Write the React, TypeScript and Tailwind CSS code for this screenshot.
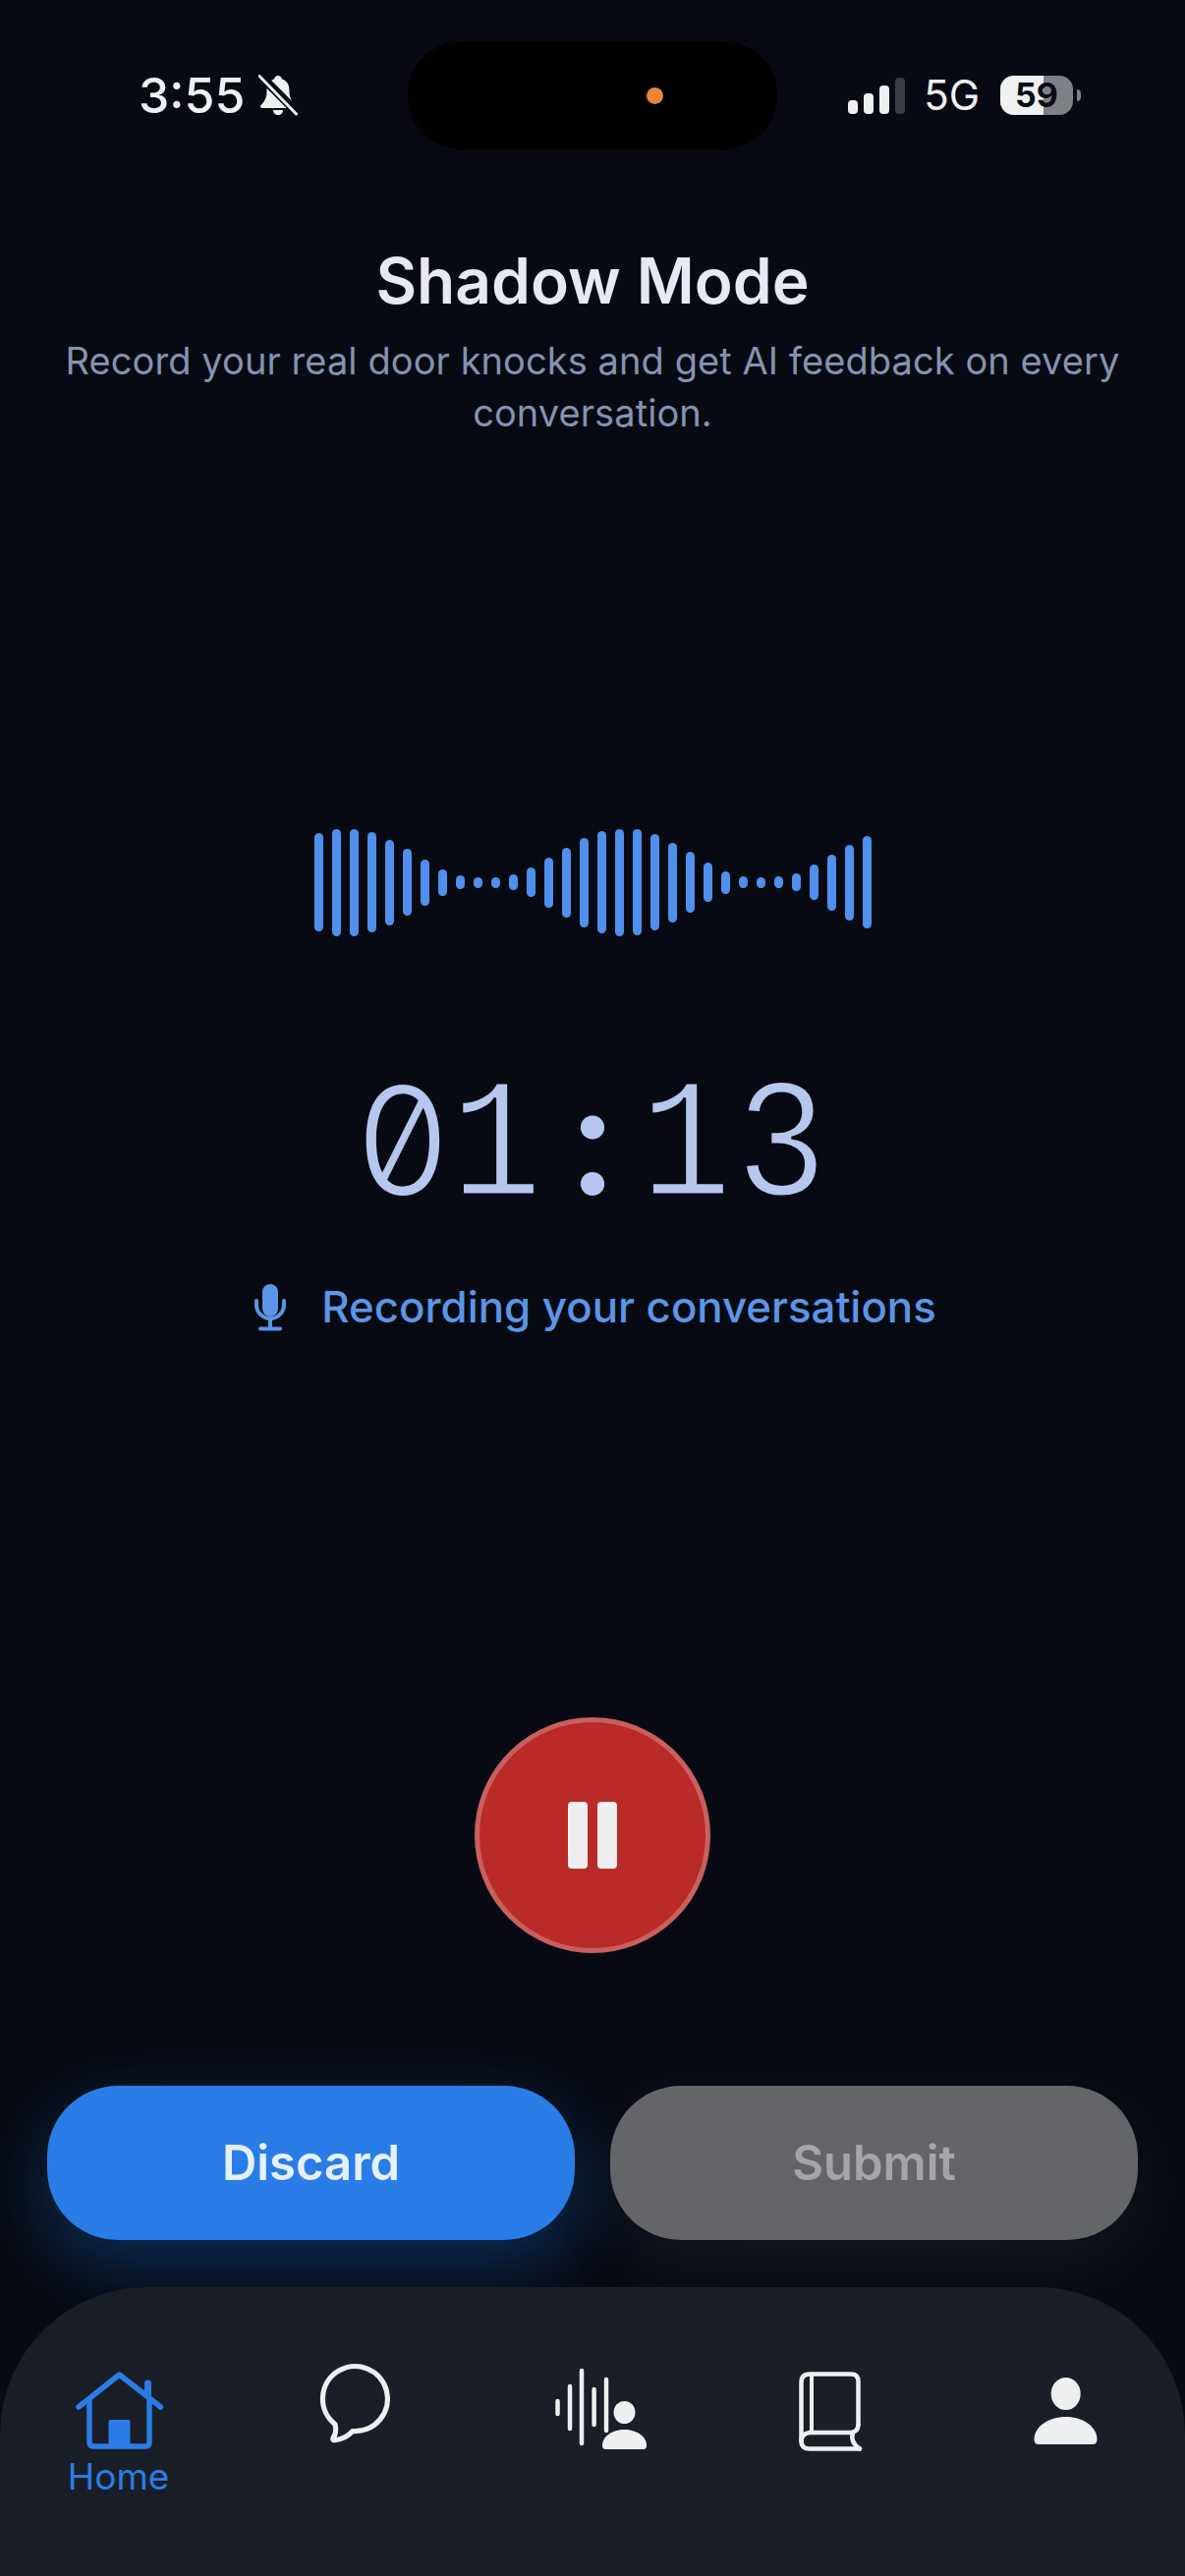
const bars = [
  100, 109, 109, 102, 87, 68, 47, 27, 14, 11, 11, 16, 30, 51, 71, 91, 104, 109, 108, 98, 81, 62, 40, 23, 12,
  11, 12, 18, 36, 57, 77, 94,
];

function BellSlash() {
  return (
    <svg viewBox="0 0 40 42" className="ml-[14px] h-[42px] w-[40px] shrink-0">
      <path
        d="M20 1c-2 0-3.500 1.500-4 3.500C10 6.500 8.500 11 8.500 17c0 6-2 10-6 14-1 1-.5 3 1.500 3h32c2 0 2.500-2 1.500-3-4-4-6-8-6-14 0-6-1.500-10.500-7.500-12.500C23.500 2.500 22 1 20 1z"
        fill="#eef0f2"
      />
      <path d="M15 36h10c0 3-2 5-5 5s-5-2-5-5z" fill="#eef0f2" />
      <path d="M-2 -3 L38 37" stroke="#070a12" strokeWidth="9" />
      <path d="M1 1.500 L38.500 40" stroke="#eef0f2" strokeWidth="3" strokeLinecap="round" />
    </svg>
  );
}

function MicIcon() {
  return (
    <svg viewBox="0 0 34 48" fill="none" stroke="#5b96e6" strokeWidth="4" strokeLinecap="round" className="h-[48px] w-[34px] shrink-0">
      <rect x="9" y="0" width="16" height="33" rx="8" fill="#5b96e6" stroke="none" />
      <path d="M3 17v4a14 14 0 0 0 28 0v-4" />
      <path d="M17 35v10M7 45.500h20" />
    </svg>
  );
}

function HomeIcon() {
  return (
    <svg viewBox="0 0 100 100" fill="none" stroke="#2a7de6" strokeWidth="5.500" strokeLinecap="round" strokeLinejoin="round" className="h-[100px] w-[100px] overflow-visible">
      <path d="M9 50 50.500 17 92.500 50" />
      <path d="M20 44v42c0 2.500 1.500 4 4 4h53c2.500 0 4-1.500 4-4V44" />
      <path d="M79.500 38V26" strokeWidth="7" />
      <rect x="39.500" y="63" width="22" height="27" rx="2" fill="#2a7de6" stroke="none" />
    </svg>
  );
}

function ChatIcon() {
  return (
    <svg viewBox="0 0 100 100" fill="none" stroke="#eeeff1" strokeWidth="5.200" strokeLinejoin="round" className="h-[100px] w-[100px] overflow-visible">
      <path d="M47 74.500A33 33 0 1 0 29 67.500Q31 76 27 81.500Q26 84.500 30 83.500Q40 82 47 74.500Z" />
    </svg>
  );
}

function VoiceIcon() {
  return (
    <svg viewBox="0 0 100 100" fill="none" stroke="#eeeff1" strokeWidth="4.500" strokeLinecap="round" className="h-[100px] w-[100px] overflow-visible">
      <path d="M14.500 44v13M27 29v43M39 13v74M51.600 32v36M64 22v52" />
      <ellipse cx="82.500" cy="55.500" rx="11" ry="11.500" fill="#eeeff1" stroke="none" />
      <path d="M60 89C60 80 70 73 82.500 73 95 73 105 80 105 89Q105 93 102 93H63Q60 93 60 89Z" fill="#eeeff1" stroke="none" />
    </svg>
  );
}

function BookIcon() {
  return (
    <svg viewBox="0 0 100 100" fill="none" stroke="#eeeff1" strokeWidth="4.500" strokeLinecap="round" strokeLinejoin="round" className="h-[100px] w-[100px] overflow-visible">
      <path d="M21.500 85V25Q21.500 16.500 30 16.500H72Q79.500 16.500 79.500 24V68" />
      <path d="M32 16.500V75" strokeWidth="4" />
      <path d="M81 92.500H30Q21.500 92.500 21.500 85 21.500 77 30 76H72Q79.500 75 79.500 68" />
      <path d="M74 76Q71 86 81 92.500" />
    </svg>
  );
}

function PersonIcon() {
  return (
    <svg viewBox="0 0 100 100" fill="#eeeff1" className="h-[100px] w-[100px] overflow-visible">
      <ellipse cx="49.700" cy="36.500" rx="15" ry="16.500" />
      <path d="M17.500 83C17.500 70 32 60 49.700 60S81.500 70 81.500 83Q81.500 88 77 88H22Q17.500 88 17.500 83Z" />
    </svg>
  );
}

export default function App() {
  return (
    <div className="flex h-[2622px] w-[1206px] flex-col overflow-hidden bg-[#070a12] font-['Inter',sans-serif]">
      {/* status bar */}
      <div className="flex shrink-0 items-center pt-[42px] pr-[106px] pl-[141px]">
        <div className="flex w-[274px] items-center">
          <span className="text-[50px] leading-none font-medium text-[#eef0f2]">3:55</span>
          <BellSlash />
        </div>
        <div className="flex h-[110px] w-[376px] items-center rounded-[55px] bg-black pl-[243px]">
          <div className="size-[17px] rounded-full bg-[#e8873a]" />
        </div>
        <div className="flex flex-1 items-center justify-end">
          <div className="flex items-end gap-[6px]">
            <div className="h-[14px] w-[10px] rounded-[4px] bg-[#eef0f2]" />
            <div className="h-[21px] w-[10px] rounded-[4px] bg-[#eef0f2]" />
            <div className="h-[29px] w-[10px] rounded-[4px] bg-[#eef0f2]" />
            <div className="h-[37px] w-[10px] rounded-[4px] bg-[#3a3d45]" />
          </div>
          <span className="ml-[19px] text-[42px] leading-none text-[#eef0f2]">5G</span>
          <div className="relative ml-[21px] h-[40px] w-[74px] overflow-hidden rounded-[14px] bg-[#7f8085]">
            <div className="h-full w-[44px] bg-[#eef0f2]" />
            <span className="absolute inset-0 flex items-center justify-center text-[34px] leading-none font-bold text-[#0a0d14]">59</span>
          </div>
          <div className="ml-[4px] h-[12px] w-[4px] rounded-r-full bg-[#7f8085]" />
        </div>
      </div>

      {/* heading */}
      <h1 className="mt-[98px] text-center text-[64px] leading-[72px] font-semibold text-[#e4e9f3]">Shadow Mode</h1>
      <p className="mx-auto mt-[19px] w-[1100px] text-center text-[38px] leading-[53px] tracking-[0.08px] text-[#8593b0]">
        Record your real door knocks and get AI feedback on every conversation.
      </p>

      {/* waveform */}
      <div className="mt-[396px] flex h-[110px] items-center justify-center gap-[9px]">
        {bars.map((h, i) => (
          <div key={i} className="w-[9px] rounded-full bg-[#4f90ec]" style={{ height: h }} />
        ))}
      </div>

      {/* timer: no installed mono is this thin, so the strokes get shaved with a bg-coloured outline */}
      <div className="mt-[137px] flex h-[140px] items-baseline justify-center text-[#b6c7ee]">
        <span className="w-[96.500px] text-center text-[152px] leading-[140px] font-light slashed-zero">0</span>
        <span className="w-[96.500px] -translate-x-1 scale-x-[0.9] text-center font-['Liberation_Mono',monospace] text-[172px] leading-[140px] [-webkit-text-stroke:3px_#070a12]">
          1
        </span>
        <span className="w-[96.500px] text-center text-[154px] leading-[140px] font-semibold">:</span>
        <span className="w-[96.500px] -translate-x-1 scale-x-[0.9] text-center font-['Liberation_Mono',monospace] text-[172px] leading-[140px] [-webkit-text-stroke:3px_#070a12]">
          1
        </span>
        <span className="w-[96.500px] -translate-x-1 scale-x-[0.9] text-center font-['Liberation_Mono',monospace] text-[172px] leading-[140px] [-webkit-text-stroke:3px_#070a12]">
          3
        </span>
      </div>

      <div className="mt-[74px] flex h-[54px] items-center justify-center gap-[35px] pl-[5px]">
        <MicIcon />
        <span className="text-[43.800px] leading-none font-medium text-[#5b96e6]">Recording your conversations</span>
      </div>

      {/* pause */}
      <button className="mx-auto mt-[390px] flex size-[240px] items-center justify-center gap-[10px] rounded-full border-[5px] border-[#c96060] bg-[#b92b28]">
        <span className="h-[68px] w-[20px] rounded-[4px] bg-[#efefef]" />
        <span className="h-[68px] w-[20px] rounded-[4px] bg-[#efefef]" />
      </button>

      {/* actions */}
      <div className="mt-[135px] flex gap-[36px] px-[48px]">
        <button className="flex h-[157px] flex-1 items-center justify-center rounded-[72px] bg-[#2a7de6] text-[49px] font-semibold text-[#e6f0f7] shadow-[0_24px_70px_rgba(30,120,235,0.32)]">
          Discard
        </button>
        <button className="flex h-[157px] flex-1 items-center justify-center rounded-[72px] bg-[#636568] text-[49px] font-semibold text-[#a5a5a8] shadow-[0_24px_70px_rgba(120,140,170,0.1)]">
          Submit
        </button>
      </div>

      {/* tab bar */}
      <nav className="relative mt-[48px] grid flex-1 grid-cols-5 rounded-t-[150px] bg-[#1a1e27] pt-[72px]">
        <div className="flex flex-col items-center">
          <HomeIcon />
          <span className="mt-px text-[37px] leading-[40px] text-[#2a7de6]">Home</span>
        </div>
        <div className="flex flex-col items-center">
          <ChatIcon />
        </div>
        <div className="flex flex-col items-center">
          <VoiceIcon />
        </div>
        <div className="flex flex-col items-center">
          <BookIcon />
        </div>
        <div className="flex flex-col items-center">
          <PersonIcon />
        </div>
      </nav>
    </div>
  );
}
